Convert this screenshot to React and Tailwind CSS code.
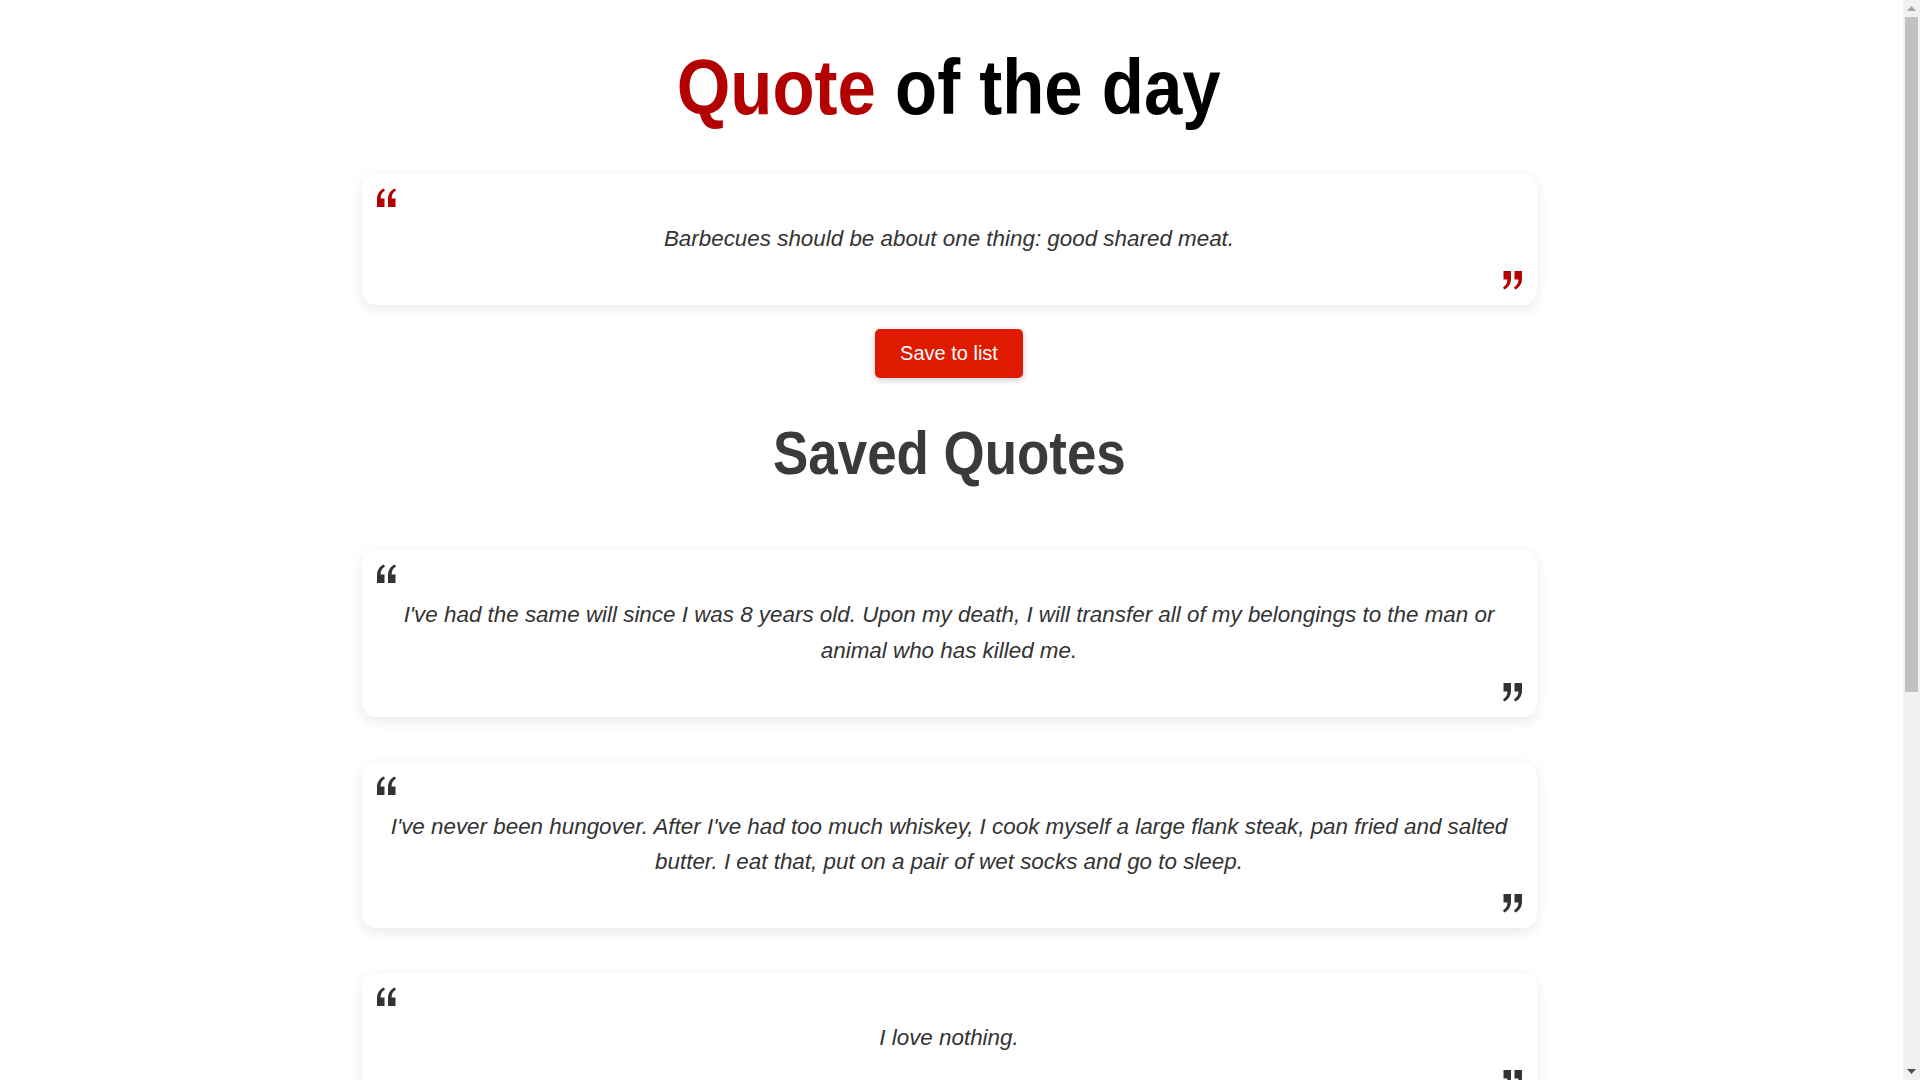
import React from 'react';

const quotes = [
  "I've had the same will since I was 8 years old. Upon my death, I will transfer all of my belongings to the man or animal who has killed me.",
  "I've never been hungover. After I've had too much whiskey, I cook myself a large flank steak, pan fried and salted butter. I eat that, put on a pair of wet socks and go to sleep.",
  'I love nothing.',
  'Clear alcohols are for rich women on diets.',
];

const QuoteMark = ({ flip, className }) => (
  <svg
    viewBox="0 0 20 19"
    fill="currentColor"
    className={`w-[20px] h-[19px] ${flip ? 'rotate-180' : ''} ${className}`}
  >
    <path d="M0 19H7.5V10.5H3.6C3.6 7 5 4.5 8 2.6L6.8 0.5C2.4 2.6 0 6.2 0 11.5Z" />
    <path d="M11 19H18.5V10.5H14.6C14.6 7 16 4.5 19 2.6L17.8 0.5C13.4 2.6 11 6.2 11 11.5Z" />
  </svg>
);

const QuoteCard = ({ text, accent }) => {
  const markColor = accent ? 'text-[#b30000]' : 'text-[#333333]';
  return (
    <div className="bg-white rounded-[14px] shadow-[0_4px_14px_rgba(0,0,0,0.09)] px-[15px] pt-[14px] pb-[15px]">
      <QuoteMark className={markColor} />
      <p className="mt-[14px] mb-[14px] text-center italic text-[22.4px] leading-[1.6] text-[#333333]">
        {text}
      </p>
      <div className="flex justify-end">
        <QuoteMark flip className={markColor} />
      </div>
    </div>
  );
};

// window scrollbar as it shows in the capture
const Scrollbar = () => (
  <div className="w-[17px] shrink-0 h-screen bg-[#f1f1f1] flex flex-col items-center">
    <div className="h-[17px] flex items-center justify-center">
      <svg viewBox="0 0 9 5" className="w-[9px] h-[5px] fill-[#a3a3a3]">
        <path d="M4.5 0L9 5H0Z" />
      </svg>
    </div>
    <div className="w-[13px] h-[675px] bg-[#c1c1c1]" />
    <div className="flex-1" />
    <div className="h-[17px] flex items-center justify-center">
      <svg viewBox="0 0 9 5" className="w-[9px] h-[5px] fill-[#505050]">
        <path d="M0 0H9L4.5 5Z" />
      </svg>
    </div>
  </div>
);

export default function App() {
  return (
    <div className="flex h-screen overflow-hidden bg-white font-['Liberation_Sans',Arial,sans-serif]">
      <main className="flex-1 min-w-0 overflow-hidden pt-[48px] pr-[5px]">
        {/* Heading */}
        <div className="flex justify-center">
          <h1 className="font-bold text-[78px] leading-none whitespace-nowrap scale-x-[0.884]">
            <span className="text-[#b30000]">Quote</span> <span className="text-black">of the day</span>
          </h1>
        </div>

        <div className="w-[1175px] mx-auto">
          <div className="mt-[48px]">
            <QuoteCard accent text="Barbecues should be about one thing: good shared meat." />
          </div>

          <div className="flex justify-center mt-[24px]">
            <button className="bg-[#e01a00] text-white text-[20px] leading-[25px] px-[25px] py-[12px] rounded-[5px] shadow-[0_2px_6px_rgba(0,0,0,0.2)]">
              Save to list
            </button>
          </div>

          <div className="flex justify-center mt-[45px]">
            <h2 className="font-bold text-[61px] leading-none text-[#3a3a3a] whitespace-nowrap scale-x-[0.867]">
              Saved Quotes
            </h2>
          </div>

          {/* Saved list */}
          <div className="mt-[66px] flex flex-col gap-[45px]">
            {quotes.map((q) => (
              <QuoteCard key={q} text={q} />
            ))}
          </div>
        </div>
      </main>
      <Scrollbar />
    </div>
  );
}
